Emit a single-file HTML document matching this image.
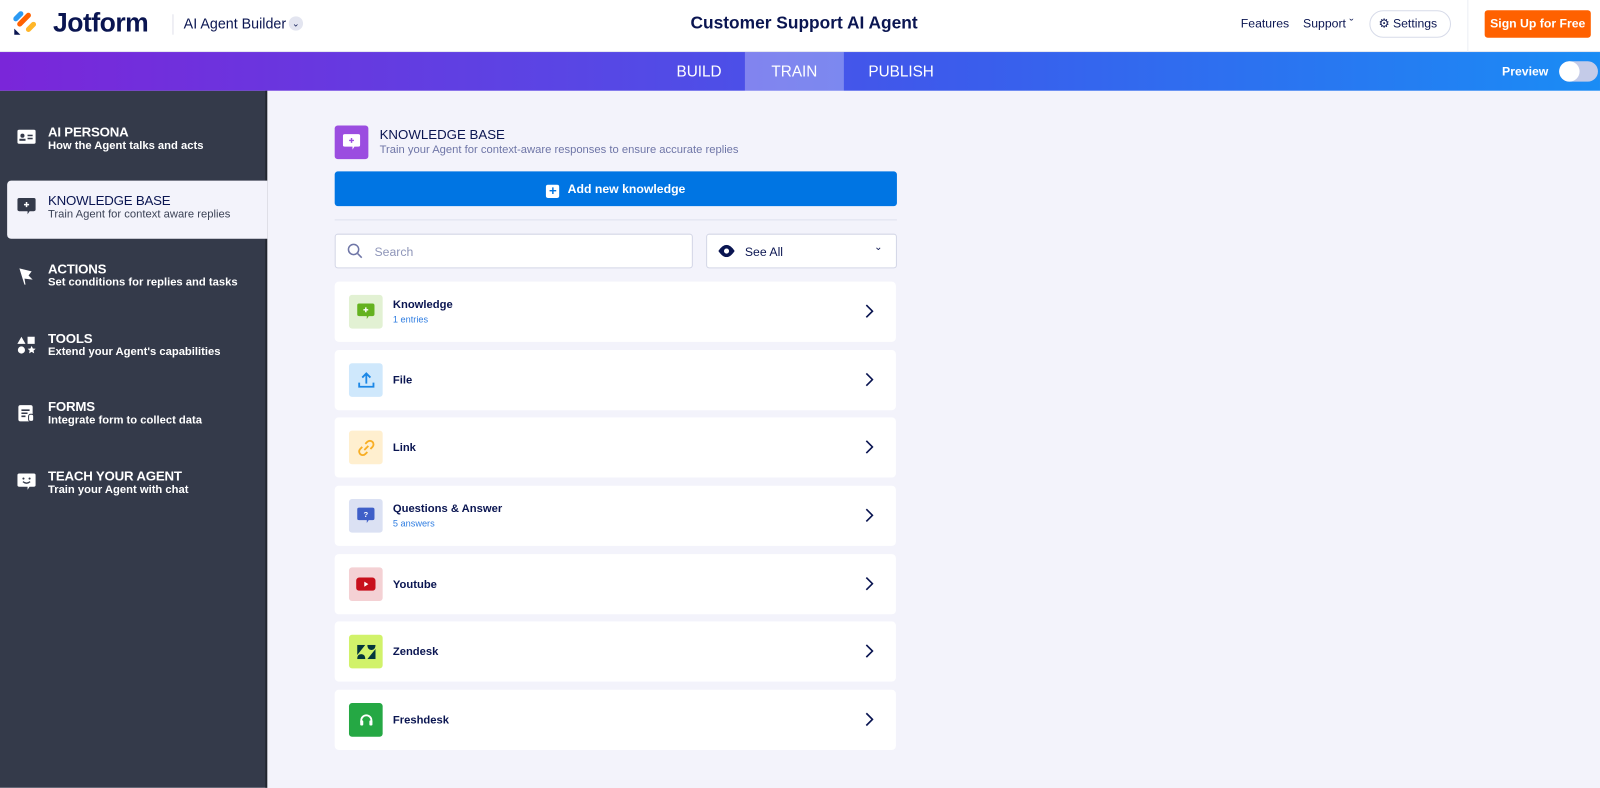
<!DOCTYPE html>
<html><head><meta charset="utf-8"><style>
*{margin:0;padding:0;box-sizing:border-box}
html,body{width:1600px;height:788px;overflow:hidden;background:#f3f3fb}
body{font-family:"Liberation Sans",sans-serif;position:relative}
#w{position:absolute;left:0;top:0;width:1568px;height:772px;transform:scale(1.0204);transform-origin:0 0}
.hdr{position:absolute;top:0;left:0;width:1568px;height:51px;background:#fff;border-bottom:1px solid #e6e8ef}
.bar{position:absolute;top:51px;left:0;width:1568px;height:38px;background:linear-gradient(90deg,#7a26d9 0%,#5a45e4 35%,#3b5cec 60%,#1a8cf5 100%)}
.side{position:absolute;top:89px;left:0;width:262px;height:683px;background:#343a4a;border-right:2px solid #22262f}
.main{position:absolute;top:89px;left:262px;width:1306px;height:683px;background:#f3f3fb}
.abs{position:absolute}
.si{position:absolute;left:0;width:262px;color:#fff}
.si .t{position:absolute;left:47px;top:0;font-size:13px;font-weight:bold;letter-spacing:-.2px}
.si .s{position:absolute;left:47px;top:15px;font-size:11px;font-weight:bold;white-space:nowrap}
.si svg{position:absolute;left:17px;top:5px}
.card{position:absolute;left:328px;width:550px;height:59px;background:#fff;border-radius:4px}
.card .ic{position:absolute;left:14px;top:13px;width:33px;height:33px;border-radius:3px;display:flex;align-items:center;justify-content:center}
.card .n{position:absolute;left:57px;font-size:11px;font-weight:bold;color:#0a1551}
.card .sub{position:absolute;left:57px;top:32px;font-size:9px;color:#2f7de1}
.card .ch{position:absolute;right:22px;top:22px}
</style></head><body><div id="w">
<div class="hdr">
 <svg class="abs" style="left:13px;top:9px" width="26" height="26" viewBox="0 0 26 26"><rect x="2" y="2" width="5" height="12" rx="2.5" transform="rotate(45 6 8)" fill="#2b9af3"/><rect x="8" y="3" width="5" height="17" rx="2.5" transform="rotate(45 12 11)" fill="#ff6100"/><rect x="15" y="11" width="5" height="12" rx="2.5" transform="rotate(45 17 17)" fill="#ffb629"/><path d="M1 19v6h6z" fill="#0a1551"/></svg>
 <div class="abs" style="left:52px;top:7px;font-size:26px;font-weight:bold;color:#0a1551;letter-spacing:-.5px">Jotform</div>
 <div class="abs" style="left:169px;top:14px;width:1px;height:20px;background:#dfe1ea"></div>
 <div class="abs" style="left:180px;top:15px;font-size:14px;color:#0a1551">AI Agent Builder</div>
 <div class="abs" style="left:283px;top:16px;width:14px;height:14px;border-radius:50%;background:#e3e5f0;font-size:9px;color:#0a1551;text-align:center;line-height:14px">&#8964;</div>
 <div class="abs" style="left:600px;width:376px;top:13px;text-align:center;font-size:17px;font-weight:bold;color:#0a1551">Customer Support AI Agent</div>
 <div class="abs" style="left:1216px;top:16px;font-size:12px;color:#0a1551">Features</div>
 <div class="abs" style="left:1277px;top:16px;font-size:12px;color:#0a1551">Support &#711;</div>
 <div class="abs" style="left:1342px;top:10px;width:80px;height:27px;border:1px solid #d7dbe9;border-radius:14px;font-size:12px;color:#0a1551;line-height:25px;padding-left:8px">&#9881; Settings</div>
 <div class="abs" style="left:1438px;top:0;width:1px;height:51px;background:#eceef4"></div>
 <div class="abs" style="left:1455px;top:10px;width:104px;height:27px;background:#ff6100;border-radius:3px;color:#fff;font-size:12px;font-weight:bold;text-align:center;line-height:27px">Sign Up for Free</div>
</div>
<div class="bar">
 <div class="abs" style="left:730px;top:0;width:97px;height:38px;background:rgba(255,255,255,.3)"></div>
 <div class="abs" style="left:663px;top:11px;color:#fff;font-size:15px">BUILD</div>
 <div class="abs" style="left:756px;top:11px;color:#fff;font-size:15px">TRAIN</div>
 <div class="abs" style="left:851px;top:11px;color:#fff;font-size:15px">PUBLISH</div>
 <div class="abs" style="left:1472px;top:12px;color:#fff;font-size:12px;font-weight:bold">Preview</div>
 <div class="abs" style="left:1528px;top:9px;width:38px;height:20px;border-radius:10px;background:#c4cbe8"></div>
 <div class="abs" style="left:1528px;top:9px;width:20px;height:20px;border-radius:50%;background:#fff"></div>
</div>
<div class="side"></div>
<div class="main"></div>
<div class="abs" style="left:7px;top:177px;width:255px;height:57px;background:#f3f3fb;border-radius:4px 0 0 4px"></div>

<div class="si" style="top:122px"><svg width="18" height="14" viewBox="0 0 18 14"><rect width="18" height="14" rx="2" fill="#fff"/><circle cx="5" cy="6" r="2" fill="#343a4a"/><rect x="2" y="9" width="6" height="2" fill="#343a4a"/><rect x="10" y="5" width="5" height="1.5" fill="#343a4a"/><rect x="10" y="8" width="5" height="1.5" fill="#343a4a"/></svg><div class="t">AI PERSONA</div><div class="s">How the Agent talks and acts</div></div>
<div class="si" style="top:189px;color:#0a1551"><svg width="18" height="17" viewBox="0 0 18 17"><path d="M2 0h14a2 2 0 0 1 2 2v9a2 2 0 0 1-2 2h-4l-2 3v-3H2a2 2 0 0 1-2-2V2a2 2 0 0 1 2-2z" fill="#343a4a"/><path d="M9 4v5M6.5 6.5h5" stroke="#fff" stroke-width="1.5"/></svg><div class="t" style="font-weight:normal">KNOWLEDGE BASE</div><div class="s" style="font-weight:normal;color:#3b4256">Train Agent for context aware replies</div></div>
<div class="si" style="top:256px"><svg width="18" height="18" viewBox="0 0 18 18"><path d="M2 2l12 3-3 4 4 4-8-1 1 6-1 0z" fill="#fff"/></svg><div class="t">ACTIONS</div><div class="s">Set conditions for replies and tasks</div></div>
<div class="si" style="top:324px"><svg width="18" height="18" viewBox="0 0 18 18"><path d="M4 1l4 7H0z" fill="#fff"/><rect x="10" y="1" width="7" height="7" fill="#fff"/><circle cx="4" cy="14" r="3.5" fill="#fff"/><path d="M14 10l1.2 2.5 2.7.3-2 1.8.6 2.7-2.5-1.4-2.5 1.4.6-2.7-2-1.8 2.7-.3z" fill="#fff"/></svg><div class="t">TOOLS</div><div class="s">Extend your Agent's capabilities</div></div>
<div class="si" style="top:391px"><svg width="18" height="18" viewBox="0 0 18 18"><rect x="1" y="1" width="14" height="16" rx="2" fill="#fff"/><path d="M4 6h8M4 9h6M4 12h4" stroke="#343a4a" stroke-width="1.5"/><rect x="11" y="10" width="5" height="7" rx="2" fill="#fff" stroke="#343a4a"/></svg><div class="t">FORMS</div><div class="s">Integrate form to collect data</div></div>
<div class="si" style="top:459px"><svg width="18" height="17" viewBox="0 0 18 17"><path d="M2 0h14a2 2 0 0 1 2 2v9a2 2 0 0 1-2 2h-4l-2 3v-3H2a2 2 0 0 1-2-2V2a2 2 0 0 1 2-2z" fill="#fff"/><circle cx="6" cy="5" r="1" fill="#343a4a"/><circle cx="12" cy="5" r="1" fill="#343a4a"/><path d="M5.5 8q3.5 3 7 0" stroke="#343a4a" stroke-width="1.3" fill="none"/></svg><div class="t">TEACH YOUR AGENT</div><div class="s">Train your Agent with chat</div></div>

<div class="abs" style="left:328px;top:123px;width:33px;height:33px;background:#9b4de0;border-radius:3px"><svg style="margin:8px" width="17" height="17" viewBox="0 0 18 17"><path d="M2 0h14a2 2 0 0 1 2 2v9a2 2 0 0 1-2 2h-4l-2 3v-3H2a2 2 0 0 1-2-2V2a2 2 0 0 1 2-2z" fill="#fff"/><path d="M9 4v5M6.5 6.5h5" stroke="#9b4de0" stroke-width="1.5"/></svg></div>
<div class="abs" style="left:372px;top:124px;font-size:13px;color:#0a1551">KNOWLEDGE BASE</div>
<div class="abs" style="left:372px;top:141px;font-size:11px;color:#6f76a7">Train your Agent for context-aware responses to ensure accurate replies</div>
<div class="abs" style="left:328px;top:168px;width:551px;height:34px;background:#0075e3;border-radius:3px;color:#fff;font-size:12px;font-weight:bold;text-align:center;line-height:34px"><span style="display:inline-block;width:13px;height:13px;background:#fff;color:#0075e3;border-radius:2px;line-height:12px;font-size:13px;vertical-align:-2px;margin-right:8px">+</span>Add new knowledge</div>
<div class="abs" style="left:328px;top:215px;width:551px;height:1px;background:#dfe1ee"></div>
<div class="abs" style="left:328px;top:229px;width:351px;height:34px;background:#fff;border:1px solid #d3d6e6;border-radius:3px"><svg style="position:absolute;left:11px;top:8px" width="16" height="16" viewBox="0 0 16 16"><circle cx="6.5" cy="6.5" r="5" stroke="#6f76a7" stroke-width="1.5" fill="none"/><path d="M10.5 10.5l4 4" stroke="#6f76a7" stroke-width="1.5"/></svg><span style="position:absolute;left:38px;top:10px;font-size:12px;color:#8f96b9">Search</span></div>
<div class="abs" style="left:692px;top:229px;width:187px;height:34px;background:#fff;border:1px solid #d3d6e6;border-radius:3px"><svg style="position:absolute;left:11px;top:10px" width="16" height="12" viewBox="0 0 16 12"><path d="M0 6q8-12 16 0q-8 12-16 0z" fill="#0a1551"/><circle cx="8" cy="6" r="2.5" fill="#fff"/></svg><span style="position:absolute;left:37px;top:10px;font-size:12px;color:#0a1551">See All</span><span style="position:absolute;right:13px;top:7px;font-size:10px;color:#0a1551">&#8964;</span></div>

<div class="card" style="top:276px"><div class="ic" style="background:#e2f1d3"><svg width="17" height="17" viewBox="0 0 18 17"><path d="M2 0h14a2 2 0 0 1 2 2v9a2 2 0 0 1-2 2h-4l-2 3v-3H2a2 2 0 0 1-2-2V2a2 2 0 0 1 2-2z" fill="#64b21f"/><path d="M9 4v5M6.5 6.5h5" stroke="#fff" stroke-width="1.5"/></svg></div><div class="n" style="top:17px">Knowledge</div><div class="sub">1 entries</div><svg class="ch" width="8" height="14" viewBox="0 0 8 14"><path d="M1 1l6 6-6 6" stroke="#0a1551" stroke-width="1.6" fill="none"/></svg></div>
<div class="card" style="top:343px"><div class="ic" style="background:#cfe8fc"><svg width="18" height="18" viewBox="0 0 18 18"><path d="M9 12V2M5 6l4-4 4 4M2 11v4h14v-4" stroke="#1b87e6" stroke-width="1.8" fill="none"/></svg></div><div class="n" style="top:24px">File</div><svg class="ch" width="8" height="14" viewBox="0 0 8 14"><path d="M1 1l6 6-6 6" stroke="#0a1551" stroke-width="1.6" fill="none"/></svg></div>
<div class="card" style="top:409px"><div class="ic" style="background:#ffefcf"><svg width="18" height="18" viewBox="0 0 18 18"><path d="M8 5l2-2a3 3 0 0 1 5 5l-2 2M10 13l-2 2a3 3 0 0 1-5-5l2-2M7 11l4-4" stroke="#f8ae24" stroke-width="1.8" fill="none"/></svg></div><div class="n" style="top:24px">Link</div><svg class="ch" width="8" height="14" viewBox="0 0 8 14"><path d="M1 1l6 6-6 6" stroke="#0a1551" stroke-width="1.6" fill="none"/></svg></div>
<div class="card" style="top:476px"><div class="ic" style="background:#dbe1f3"><svg width="17" height="17" viewBox="0 0 18 17"><path d="M2 0h14a2 2 0 0 1 2 2v9a2 2 0 0 1-2 2h-4l-2 3v-3H2a2 2 0 0 1-2-2V2a2 2 0 0 1 2-2z" fill="#3f5fc8"/><text x="9" y="10" font-size="8" font-weight="bold" fill="#fff" text-anchor="middle" font-family="Liberation Sans">?</text></svg></div><div class="n" style="top:17px">Questions &amp; Answer</div><div class="sub">5 answers</div><svg class="ch" width="8" height="14" viewBox="0 0 8 14"><path d="M1 1l6 6-6 6" stroke="#0a1551" stroke-width="1.6" fill="none"/></svg></div>
<div class="card" style="top:543px"><div class="ic" style="background:#f4d1d4"><svg width="19" height="13" viewBox="0 0 19 13"><rect width="19" height="13" rx="3" fill="#c8101c"/><path d="M8 4v5l4-2.5z" fill="#fff"/></svg></div><div class="n" style="top:24px">Youtube</div><svg class="ch" width="8" height="14" viewBox="0 0 8 14"><path d="M1 1l6 6-6 6" stroke="#0a1551" stroke-width="1.6" fill="none"/></svg></div>
<div class="card" style="top:609px"><div class="ic" style="background:#d1f26a"><svg width="18" height="14" viewBox="0 0 18 14"><path d="M0 0h8L0 10zM8 14H0q0-5 4-5t4 5zM10 0q0 5 4 5t4-5zM18 4v10h-8z" fill="#03363d"/></svg></div><div class="n" style="top:24px">Zendesk</div><svg class="ch" width="8" height="14" viewBox="0 0 8 14"><path d="M1 1l6 6-6 6" stroke="#0a1551" stroke-width="1.6" fill="none"/></svg></div>
<div class="card" style="top:676px"><div class="ic" style="background:#25a844"><svg width="16" height="16" viewBox="0 0 16 16"><path d="M3 10V8a5 5 0 0 1 10 0v2" stroke="#fff" stroke-width="1.8" fill="none"/><rect x="2" y="8" width="3" height="5" rx="1" fill="#fff"/><rect x="11" y="8" width="3" height="5" rx="1" fill="#fff"/></svg></div><div class="n" style="top:24px">Freshdesk</div><svg class="ch" width="8" height="14" viewBox="0 0 8 14"><path d="M1 1l6 6-6 6" stroke="#0a1551" stroke-width="1.6" fill="none"/></svg></div>
</div></body></html>
